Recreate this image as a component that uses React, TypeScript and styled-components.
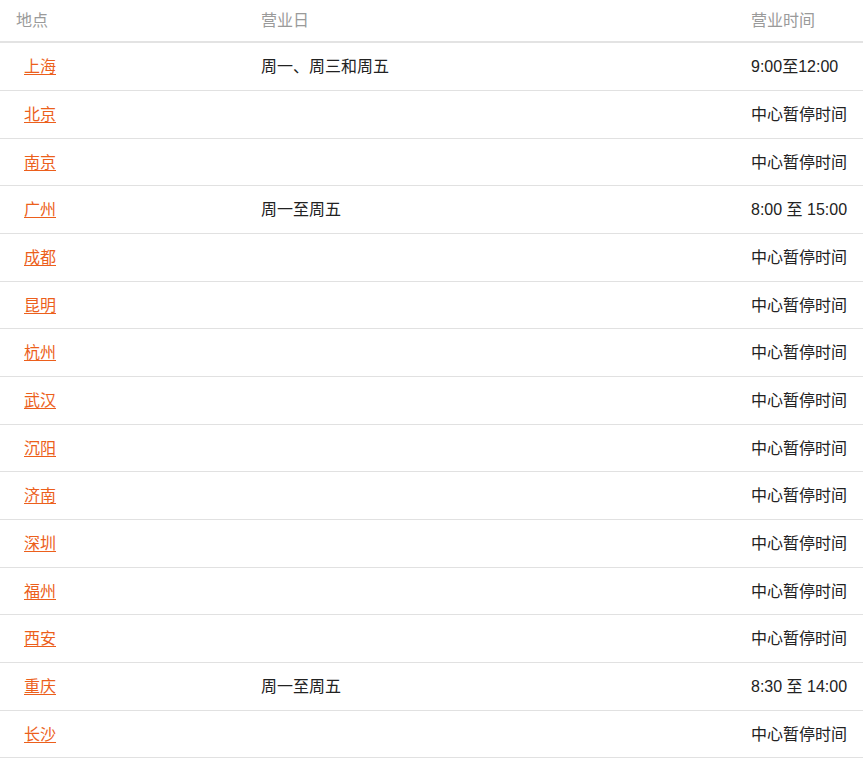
import styled, { createGlobalStyle } from 'styled-components';

const GlobalStyle = createGlobalStyle`
    body {
        margin: 0;
        background: #fff;
        font-family: 'Liberation Sans', 'Noto Sans CJK SC', sans-serif;
        color: #333;
    }
`;

type Center = {
    city: string;
    days?: string;
    hours?: string;
};

const centers: Center[] = [
    { city: '上海', days: '周一、周三和周五', hours: '9:00至12:00' },
    { city: '北京' },
    { city: '南京' },
    { city: '广州', days: '周一至周五', hours: '8:00 至 15:00' },
    { city: '成都' },
    { city: '昆明' },
    { city: '杭州' },
    { city: '武汉' },
    { city: '沉阳' },
    { city: '济南' },
    { city: '深圳' },
    { city: '福州' },
    { city: '西安' },
    { city: '重庆', days: '周一至周五', hours: '8:30 至 14:00' },
    { city: '长沙' },
];

const Table = styled.div`
    width: 100%;
    font-size: 16px;
`;

const Row = styled.div<{ $head?: boolean }>`
    display: grid;
    grid-template-columns: 245px 490px 1fr;
    border-bottom: ${({ $head }) => ($head ? '2px solid #e3e3e3' : '1px solid #e1e1e1')};
    color: ${({ $head }) => ($head ? '#9a9a9a' : '#222')};
`;

const Cell = styled.div<{ $head?: boolean }>`
    padding: ${({ $head }) => ($head ? '10px 16px 9.33px' : '13px 16px 11px')};
    line-height: ${({ $head }) => ($head ? '22px' : '22.67px')};
    white-space: nowrap;
`;

const CityLink = styled.a`
    margin-left: 8px;
    color: #ec5f1c;
    text-decoration: underline;
    text-underline-offset: 2px;
    cursor: pointer;
`;

export default function App() {
    return (
        <>
            <GlobalStyle />
            <Table>
                <Row $head>
                    <Cell $head>地点</Cell>
                    <Cell $head>营业日</Cell>
                    <Cell $head>营业时间</Cell>
                </Row>
                {centers.map((center) => (
                    <Row key={center.city}>
                        <Cell>
                            <CityLink href="#">{center.city}</CityLink>
                        </Cell>
                        <Cell>{center.days ?? ''}</Cell>
                        <Cell>{center.hours ?? '中心暂停时间'}</Cell>
                    </Row>
                ))}
            </Table>
        </>
    );
}
